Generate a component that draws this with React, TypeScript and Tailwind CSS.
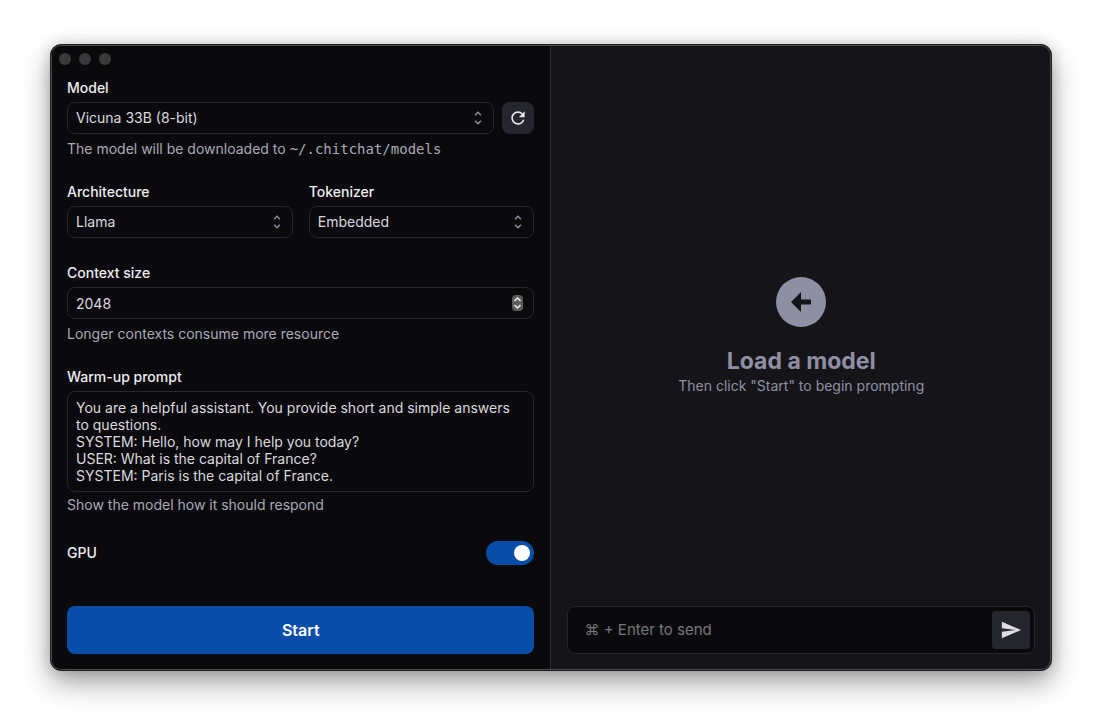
import React, { useState } from 'react';
import { MdRefresh, MdSend, MdUnfoldMore } from 'react-icons/md';

const WARMUP = `You are a helpful assistant. You provide short and simple answers to questions.
SYSTEM: Hello, how may I help you today?
USER: What is the capital of France?
SYSTEM: Paris is the capital of France.`;

const fieldClass =
    'block w-full rounded-lg border border-[#26262d] bg-[#0a0a0c] pl-2 text-sm text-[#d9d9de] outline-none focus:border-[#4a4a58]';

const Label = ({ htmlFor, children }: { htmlFor: string; children: React.ReactNode }) => (
    <label htmlFor={htmlFor} className="block text-sm leading-5 font-medium text-[#ededf0]">
        {children}
    </label>
);

const Hint = ({ children }: { children: React.ReactNode }) => (
    <p className="text-sm leading-[17px] text-[#a9a9b6]">{children}</p>
);

const Select = ({ id, options }: { id: string; options: string[] }) => (
    <div className="relative min-w-0 flex-1">
        <select id={id} className={`${fieldClass} h-8 appearance-none pr-8`}>
            {options.map((option) => (
                <option key={option}>{option}</option>
            ))}
        </select>
        <MdUnfoldMore className="pointer-events-none absolute top-[7px] right-[7px] h-[18px] w-[18px] text-[#8f8fa3]" />
    </div>
);

const App = () => {
    const [context, setContext] = useState(2048);
    const [gpu, setGpu] = useState(true);

    return (
        <div className="flex min-h-screen bg-white pt-11 pr-[42px] pb-[41px] pl-[50px] font-[Inter,sans-serif]">
            <div className="flex w-full overflow-hidden rounded-[11px] border border-[#1c1c1e] bg-[#151519] shadow-[0_12px_28px_rgba(0,0,0,0.36),0_0_14px_rgba(0,0,0,0.16)]">
                <div className="flex flex-1 rounded-[10px] shadow-[inset_0_0_0_1px_#4d4d50]">

                    {/* Settings */}
                    <section className="m-px mr-0 flex w-1/2 flex-col rounded-l-[9px] border-r border-[#2c2c34] bg-[#0a0a0c]">
                        <div className="flex gap-2 px-[7px] pt-[7px]">
                            <span className="h-3 w-3 rounded-full bg-[#3a3a3c]" />
                            <span className="h-3 w-3 rounded-full bg-[#3a3a3c]" />
                            <span className="h-3 w-3 rounded-full bg-[#3a3a3c]" />
                        </div>

                        <form
                            className="flex flex-1 flex-col pt-[13px] pr-4 pb-[15px] pl-[15px]"
                            onSubmit={(e) => e.preventDefault()}
                        >
                            <div className="flex flex-col gap-[25px]">
                                <div>
                                    <Label htmlFor="model">Model</Label>
                                    <div className="mt-1 mb-1.5 flex gap-2">
                                        <Select id="model" options={['Vicuna 33B (8-bit)', 'Vicuna 13B (8-bit)', 'Vicuna 7B (8-bit)']} />
                                        <button
                                            type="button"
                                            aria-label="Refresh"
                                            className="flex h-8 w-8 items-center justify-center rounded-lg bg-[#25252d] text-[#e4e4e8]"
                                        >
                                            <MdRefresh className="h-5 w-5" />
                                        </button>
                                    </div>
                                    <Hint>
                                        The model will be downloaded to{' '}
                                        <code className="font-['DejaVu_Sans_Mono',monospace] text-sm leading-none">~/.chitchat/models</code>
                                    </Hint>
                                </div>

                                <div className="grid grid-cols-2 gap-4">
                                    <div>
                                        <Label htmlFor="architecture">Architecture</Label>
                                        <div className="mt-1 flex">
                                            <Select id="architecture" options={['Llama', 'Bloom', 'GPT-2', 'MPT']} />
                                        </div>
                                    </div>
                                    <div>
                                        <Label htmlFor="tokenizer">Tokenizer</Label>
                                        <div className="mt-1 flex">
                                            <Select id="tokenizer" options={['Embedded', 'Local', 'Remote']} />
                                        </div>
                                    </div>
                                </div>

                                <div>
                                    <Label htmlFor="context">Context size</Label>
                                    <div className="relative mt-1 mb-1.5">
                                        <input
                                            id="context"
                                            type="number"
                                            value={context}
                                            onChange={(e) => setContext(Number(e.target.value))}
                                            className={`${fieldClass} h-8 pr-8 [appearance:textfield] [&::-webkit-inner-spin-button]:appearance-none`}
                                        />
                                        <div className="absolute top-2 right-[11px] flex h-4 w-[11px] flex-col overflow-hidden rounded bg-[#5b5b5b]">
                                            <button type="button" aria-label="Increase" onClick={() => setContext(context + 1)} className="h-2">
                                                <svg viewBox="0 0 11 8" className="h-2 w-[11px]" fill="none" stroke="#f0f0f0" strokeWidth="1.5">
                                                    <path d="M2.5 6 5.5 3 8.5 6" />
                                                </svg>
                                            </button>
                                            <button type="button" aria-label="Decrease" onClick={() => setContext(context - 1)} className="h-2">
                                                <svg viewBox="0 0 11 8" className="h-2 w-[11px]" fill="none" stroke="#f0f0f0" strokeWidth="1.5">
                                                    <path d="M2.5 2 5.5 5 8.5 2" />
                                                </svg>
                                            </button>
                                        </div>
                                    </div>
                                    <Hint>Longer contexts consume more resource</Hint>
                                </div>

                                <div>
                                    <Label htmlFor="warmup">Warm-up prompt</Label>
                                    <textarea
                                        id="warmup"
                                        rows={5}
                                        defaultValue={WARMUP}
                                        className={`${fieldClass} my-1 resize-none py-[7px] pr-3 leading-[17px]`}
                                    />
                                    <Hint>Show the model how it should respond</Hint>
                                </div>

                                <div className="flex h-[30px] items-center justify-between">
                                    <Label htmlFor="gpu">GPU</Label>
                                    <input
                                        id="gpu"
                                        type="checkbox"
                                        role="switch"
                                        checked={gpu}
                                        onChange={(e) => setGpu(e.target.checked)}
                                        className="h-6 w-12 appearance-none rounded-full bg-[#3a3a44] p-1 before:block before:h-4 before:w-4 before:rounded-full before:bg-white checked:bg-[#084da8] checked:before:ml-6"
                                    />
                                </div>
                            </div>

                            <button type="submit" className="mt-auto h-12 rounded-lg bg-[#084da8] text-base font-semibold text-white">
                                Start
                            </button>
                        </form>
                    </section>

                    {/* Chat */}
                    <main className="flex w-1/2 flex-col px-4 pb-4 text-[#8f8fa3]">
                        <div className="flex flex-1 flex-col items-center justify-center pt-5">
                            <svg viewBox="0 0 50 50" className="mb-[18px] h-[50px] w-[50px]">
                                <circle cx="25" cy="25" r="25" fill="#8f8fa3" />
                                <path d="M15 25 25 15V22.5H35V27.5H25V35Z" fill="#151519" />
                            </svg>
                            <h1 className="text-[23px] leading-8 font-bold">Load a model</h1>
                            <p className="text-sm leading-[17px]">Then click "Start" to begin prompting</p>
                        </div>

                        <form
                            className="flex h-12 items-center rounded-lg border border-[#26262d] bg-[#0a0a0c] pr-1 pl-4"
                            onSubmit={(e) => e.preventDefault()}
                        >
                            <input
                                aria-label="Prompt"
                                placeholder="⌘ + Enter to send"
                                className="min-w-0 flex-1 text-[15px] text-[#d9d9de] outline-none placeholder:text-[#76767a]"
                            />
                            <button
                                type="submit"
                                aria-label="Send"
                                className="flex h-[38px] w-[38px] items-center justify-center rounded bg-[#25252d] text-[#dddde2]"
                            >
                                <MdSend className="h-[22px] w-[22px]" />
                            </button>
                        </form>
                    </main>
                </div>
            </div>
        </div>
    );
};

export default App;
